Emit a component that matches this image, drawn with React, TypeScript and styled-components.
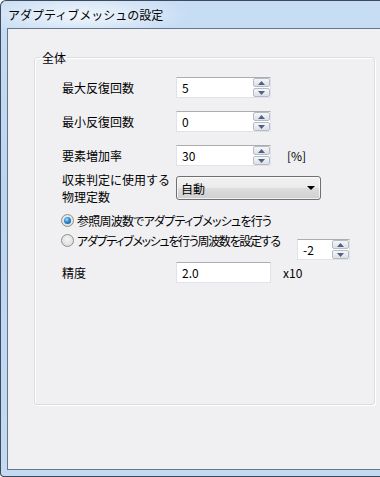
import React, { useState } from 'react';
import styled, { createGlobalStyle } from 'styled-components';

const GlobalStyle = createGlobalStyle`
  html, body {
    margin: 0;
    padding: 0;
    width: 380px;
    height: 477px;
    overflow: hidden;
  }
  body {
    font-family: "Noto Sans CJK JP", "Noto Sans", sans-serif;
    font-size: 12px;
    color: #000;
  }
`;

const Window = styled.div`
  width: 392px;
  height: 477px;
  box-sizing: border-box;
  display: flex;
  flex-direction: column;
  border: 1px solid #3c4a5b;
  border-right: none;
  border-radius: 6px 0 0 4px;
  padding: 0 0 6px 6px;
  background:
    radial-gradient(ellipse 110px 22px at 80px 14px, rgba(255, 255, 255, 0.75), rgba(255, 255, 255, 0) 100%),
    linear-gradient(180deg, #c7ddf4 0%, #bcd5ef 40%, #c3daf2 100%);
`;

const TitleBar = styled.div`
  height: 27px;
  display: flex;
  align-items: center;
  padding-left: 1px;
  font-size: 12px;
  color: #000;
  white-space: nowrap;
`;

const Client = styled.div`
  flex: 1;
  display: flex;
  flex-direction: column;
  background: #f0f0f3;
  border: 1px solid #66768a;
  border-right: none;
`;

const Group = styled.fieldset`
  box-sizing: border-box;
  height: 355px;
  margin: 21px 17px 0 26px;
  padding: 0;
  border: 1px solid #d5dfe5;
  border-radius: 3px;
  box-shadow: inset 1px 1px 0 #fff, 1px 1px 0 #fff;
  min-width: 0;
`;

const Caption = styled.legend`
  margin-left: 5px;
  padding: 0 1px 0 2px;
  line-height: 15px;
  font-size: 12px;
`;

const Content = styled.div`
  padding: 12px 0 0 27px;
  display: flex;
  flex-direction: column;
`;

const Row = styled.div<{ $top: number }>`
  display: flex;
  align-items: center;
  margin-top: ${p => p.$top}px;
`;

const Label = styled.div`
  width: 114px;
  flex: none;
  display: flex;
  flex-direction: column;
  white-space: nowrap;
`;

const LabelLine = styled.span`
  display: block;
  line-height: 17px;
`;

const TextBox = styled.div<{ $w: number }>`
  box-sizing: border-box;
  width: ${p => p.$w}px;
  height: 21px;
  background: #fff;
  border: 1px solid #dfe3e9;
  border-top-color: #abadb3;
  padding-left: 5px;
  display: flex;
  align-items: center;
  font-size: 12px;
`;

const Spin = styled.div`
  display: flex;
  box-sizing: border-box;
  height: 21px;
  background: #fff;
  border: 1px solid #dfe3e9;
  border-top-color: #abadb3;
`;

const SpinText = styled.div<{ $w: number }>`
  width: ${p => p.$w}px;
  padding-left: 5px;
  box-sizing: border-box;
  display: flex;
  align-items: center;
  font-size: 12px;
`;

const SpinButtons = styled.div`
  width: 17px;
  display: flex;
  flex-direction: column;
  gap: 1px;
`;

const SpinButton = styled.div`
  flex: 1;
  box-sizing: border-box;
  border: 1px solid #b6bcc6;
  border-radius: 2px;
  background: linear-gradient(180deg, #f6f7f9 0%, #e9ebef 50%, #dcdfe4 100%);
  display: flex;
  align-items: center;
  justify-content: center;
`;

const Unit = styled.span<{ $gap: number }>`
  margin-left: ${p => p.$gap}px;
  font-size: 12px;
`;

const Combo = styled.div`
  box-sizing: border-box;
  width: 145px;
  height: 24px;
  border: 1px solid #707070;
  border-radius: 3px;
  background: linear-gradient(180deg, #f2f2f2 0%, #ebebeb 48%, #dddddd 52%, #cfcfcf 100%);
  box-shadow: inset 0 0 0 1px rgba(255, 255, 255, 0.7);
  display: flex;
  align-items: center;
  justify-content: space-between;
  padding: 0 5px 0 4px;
  font-size: 12px;
`;

const RadioRow = styled.div<{ $top: number }>`
  display: flex;
  align-items: flex-start;
  margin-top: ${p => p.$top}px;
`;

const RadioItem = styled.label<{ $w?: number; $tight?: boolean }>`
  display: flex;
  align-items: center;
  height: 19px;
  width: ${p => (p.$w ? `${p.$w}px` : 'auto')};
  flex: none;
  white-space: nowrap;
  font-feature-settings: "palt";
  letter-spacing: ${p => (p.$tight ? '-1.3px' : '-0.75px')};
  cursor: default;
`;

const RadioDot = styled.span<{ $on: boolean }>`
  box-sizing: border-box;
  flex: none;
  width: 13px;
  height: 13px;
  border-radius: 50%;
  border: 1px solid #8e8f8f;
  background: radial-gradient(circle at 50% 40%, #f4f4f4, #d6d6d6);
  margin: 0 3px 0 -1px;
  display: flex;
  align-items: center;
  justify-content: center;
  &::after {
    content: '';
    width: 7px;
    height: 7px;
    border-radius: 50%;
    display: ${p => (p.$on ? 'block' : 'none')};
    background: radial-gradient(circle at 40% 35%, #9ee0ff 0%, #2c86c9 45%, #12508e 100%);
  }
`;

const SpinFloat = styled.div`
  margin-top: 8px;
`;

const Arrow = ({ up }: { up?: boolean }) => (
  <svg width="7" height="4" viewBox="0 0 7 4">
    <path d={up ? 'M0 4 L3.5 0 L7 4 Z' : 'M0 0 L7 0 L3.5 4 Z'} fill="#4f6286" />
  </svg>
);

const SpinBox = ({ value, textW }: { value: string; textW: number }) => (
  <Spin>
    <SpinText $w={textW}>{value}</SpinText>
    <SpinButtons>
      <SpinButton><Arrow up /></SpinButton>
      <SpinButton><Arrow /></SpinButton>
    </SpinButtons>
  </Spin>
);

const App: React.FC = () => {
  const [mode, setMode] = useState<number>(0);

  return (
    <>
      <GlobalStyle />
      <Window>
        <TitleBar>アダプティブメッシュの設定</TitleBar>
        <Client>
          <Group>
            <Caption>全体</Caption>
            <Content>
              <Row $top={0}>
                <Label>最大反復回数</Label>
                <SpinBox value="5" textW={76} />
              </Row>
              <Row $top={13}>
                <Label>最小反復回数</Label>
                <SpinBox value="0" textW={76} />
              </Row>
              <Row $top={13}>
                <Label>要素増加率</Label>
                <SpinBox value="30" textW={76} />
                <Unit $gap={16}>[%]</Unit>
              </Row>
              <Row $top={5}>
                <Label>
                  <LabelLine>収束判定に使用する</LabelLine>
                  <LabelLine>物理定数</LabelLine>
                </Label>
                <Combo>
                  <span>自動</span>
                  <svg width="8" height="4" viewBox="0 0 8 4">
                    <path d="M0 0 L8 0 L4 4 Z" fill="#000" />
                  </svg>
                </Combo>
              </Row>
              <RadioRow $top={6}>
                <RadioItem onClick={() => setMode(0)}>
                  <RadioDot $on={mode === 0} />
                  参照周波数でアダプティブメッシュを行う
                </RadioItem>
              </RadioRow>
              <RadioRow $top={1}>
                <RadioItem $w={235} $tight onClick={() => setMode(1)}>
                  <RadioDot $on={mode === 1} />
                  アダプティブメッシュを行う周波数を設定する
                </RadioItem>
                <SpinFloat>
                  <SpinBox value="-2" textW={34} />
                </SpinFloat>
              </RadioRow>
              <Row $top={2}>
                <Label>精度</Label>
                <TextBox $w={95}>2.0</TextBox>
                <Unit $gap={12}>x10</Unit>
              </Row>
            </Content>
          </Group>
        </Client>
      </Window>
    </>
  );
};

export default App;
